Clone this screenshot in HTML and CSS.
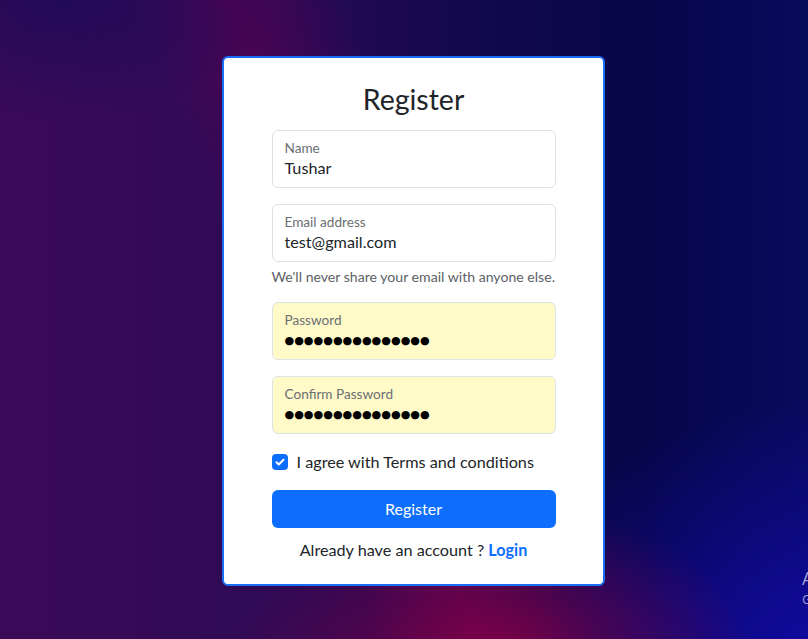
FILE: index.html
```html
<!DOCTYPE html>
<html lang="en">
<head>
<meta charset="utf-8">
<title>Register</title>
<link rel="stylesheet" href="styles.css">
</head>
<body>
<main class="page">
  <section class="card">
    <h2 class="title">Register</h2>
    <form class="form">
      <div class="field">
        <span class="label">Name</span>
        <span class="value">Tushar</span>
      </div>
      <div class="field field-email">
        <span class="label">Email address</span>
        <span class="value">test@gmail.com</span>
      </div>
      <p class="help">We'll never share your email with anyone else.</p>
      <div class="field autofill">
        <span class="label">Password</span>
        <span class="value dots">●●●●●●●●●●●●●●●</span>
      </div>
      <div class="field autofill">
        <span class="label">Confirm Password</span>
        <span class="value dots">●●●●●●●●●●●●●●●</span>
      </div>
      <label class="check">
        <span class="box"><svg viewBox="0 0 16 16" width="16" height="16"><path d="M4.5 8.2l2.3 2.3 4.7-4.8" fill="none" stroke="#fff" stroke-width="2" stroke-linecap="round" stroke-linejoin="round"/></svg></span>
        <span>I agree with Terms and conditions</span>
      </label>
      <div class="btn">Register</div>
      <p class="login">Already have an account ? <a class="link">Login</a></p>
    </form>
  </section>
  <div class="watermark">
    <span class="wm1">Activate Windows</span>
    <span class="wm2">Go to Settings to activate Windows.</span>
  </div>
</main>
</body>
</html>
```
FILE: styles.css
```css
* { box-sizing: border-box; }
html, body { margin: 0; padding: 0; }
body {
  font-family: Lato, "Open Sans", sans-serif;
  color: #212529;
  width: 808px;
  height: 639px;
  overflow: hidden;
}
.page {
  position: relative;
  height: 639px;
  padding-top: 56px;
  background:
    radial-gradient(ellipse 260px 160px at 490px 660px, rgba(140,0,70,0.85), rgba(140,0,70,0) 100%),
    radial-gradient(ellipse 300px 260px at 820px 660px, rgba(20,10,170,0.9), rgba(20,10,170,0) 100%),
    radial-gradient(ellipse 220px 120px at 60px 0px, rgba(25,10,90,0.7), rgba(25,10,90,0) 100%),
    linear-gradient(69deg, rgba(90,0,80,0) 36%, rgba(90,0,80,0.6) 45%, rgba(60,0,80,0) 56%),
    linear-gradient(90deg, #3a0a58 0%, #300a56 30%, #140850 55%, #06064a 80%, #080a5c 100%);
}
.card {
  width: 383px;
  height: 530px;
  margin-left: 222px;
  background: #fff;
  border: 2px solid #1a6ef5;
  border-radius: 6px;
  padding-top: 24px;
}
.title {
  margin: 0 0 14px;
  text-align: center;
  font-size: 28.5px;
  line-height: 34px;
  font-weight: 400;
}
.form {
  width: 284px;
  margin: 0 auto;
}
.field {
  height: 58px;
  border: 1px solid #dee2e6;
  border-radius: 6px;
  padding: 10px 12px 0;
  display: flex;
  flex-direction: column;
  margin-bottom: 16px;
  background: #fff;
}
.field-email { margin-bottom: 0; }
.autofill { background: #fffac8; }
.label {
  font-size: 13.6px;
  line-height: 15px;
  color: #6c6f73;
}
.value {
  font-size: 16.2px;
  line-height: 24px;
  color: #212529;
}
.dots {
  color: #000;
  font-family: "DejaVu Sans", sans-serif;
  font-size: 11.1px;
  line-height: 22px;
  padding-top: 2px;
}
.help {
  margin: 4px 0 15px;
  font-size: 14.1px;
  line-height: 21px;
  color: #5c6167;
}
.check {
  display: flex;
  align-items: center;
  gap: 9px;
  font-size: 16.2px;
  line-height: 24px;
  margin-bottom: 16px;
}
.box {
  width: 16px;
  height: 16px;
  border-radius: 4px;
  background: #0d6efd;
  display: flex;
}
.btn {
  height: 38px;
  background: #0d6efd;
  border-radius: 6px;
  color: #fff;
  font-size: 16px;
  line-height: 38px;
  text-align: center;
}
.login {
  margin: 10px 0 0;
  text-align: center;
  font-size: 16.2px;
  line-height: 24px;
}
.link {
  color: #0d6efd;
  font-weight: 700;
}
.watermark {
  position: absolute;
  left: 802px;
  top: 566px;
  display: flex;
  flex-direction: column;
  white-space: nowrap;
  color: rgba(210,210,235,0.75);
  font-family: "Open Sans", sans-serif;
}
.wm1 { font-size: 18px; line-height: 24px; }
.wm2 { font-size: 13px; line-height: 18px; }
```
